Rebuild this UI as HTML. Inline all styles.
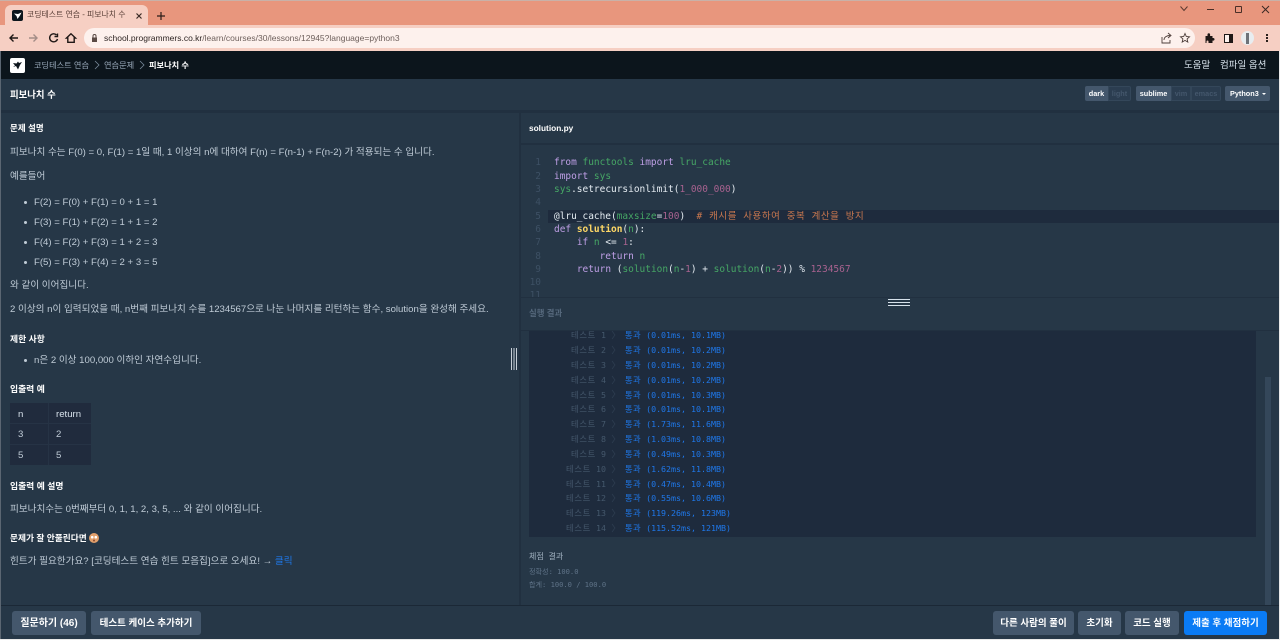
<!DOCTYPE html>
<html lang="ko"><head><meta charset="utf-8"><title>피보나치 수</title>
<style>
*{box-sizing:border-box}
html,body{margin:0;padding:0;width:1280px;height:640px;overflow:hidden;background:#263747}
body{font-family:"Liberation Sans","Noto Sans CJK KR",sans-serif;position:relative}
.a,.t,.m{position:absolute;white-space:pre}
.t{font-size:9.600px;line-height:14px;color:#c0ccd7}
.h{font-weight:700;color:#fff;font-size:8.800px}
.m{font-family:"DejaVu Sans Mono","Noto Sans CJK KR",monospace;font-size:9.470px;line-height:13px;color:#e4ebf1}
.ln{color:#3d5064;width:14px;text-align:right;left:527px}
.k{color:#bf9fe6}.g{color:#46a765}.n{color:#a8628f}.y{color:#ffd866;font-weight:700}.c{color:#c8774f;letter-spacing:.58px}
.r{font-size:8.300px;line-height:12px}
.rl{color:#45586c;text-align:right;left:536px;width:70px}
.rv{color:#1f78ea;left:625px}
.ko{letter-spacing:.4px}
.ko2{letter-spacing:.7px}
.btn{position:absolute;top:611px;height:24px;border-radius:3px;background:#44576c;color:#fff;font-size:9.500px;font-weight:700;line-height:25px;text-align:center}
.b{position:absolute;background:#44576c;color:#fff;font-size:7.300px;line-height:15px;height:15px;text-align:center;font-weight:700}
.off{background:#2b3d50;color:#44576c}
</style></head><body>
<!-- chrome -->
<div class="a" style="left:0;top:0;width:1280px;height:25px;background:#e8967d"></div>
<div class="a" style="left:0;top:0;width:1280px;height:1px;background:#c9b1a8"></div>
<div class="a" style="left:0;top:25px;width:1280px;height:26px;background:#f6cfc3"></div>
<div class="a" style="left:5px;top:5px;width:143px;height:20px;background:#f6cfc3;border-radius:6px 6px 0 0"></div>
<svg class="a" style="left:12px;top:10px" width="11" height="11" viewBox="0 0 11 11"><rect width="11" height="11" rx="2" fill="#0c151c"/><path d="M2 3.500l4 .5 3.500-1.500-1.500 3-2.500 3.500L4.500 6z" fill="#fff"/></svg>
<div class="t" style="left:27px;top:8px;font-size:7.900px;color:#5b4038">코딩테스트 연습 - 피보나치 수</div>
<svg class="a" style="left:135px;top:12px" width="8" height="8" viewBox="0 0 8 8"><path d="M1.500 1.500l5 5M6.500 1.500l-5 5" stroke="#3a2a25" stroke-width="1.200"/></svg>
<svg class="a" style="left:156px;top:11px" width="10" height="10" viewBox="0 0 10 10"><path d="M5 1v8M1 5h8" stroke="#2b1d18" stroke-width="1.200"/></svg>
<svg class="a" style="left:1179px;top:5px" width="10" height="8" viewBox="0 0 10 8"><path d="M1.500 1.500L5 5.500l3.500-4" fill="none" stroke="#5a3a30" stroke-width="1"/></svg>
<div class="a" style="left:1207px;top:9px;width:7px;height:1px;background:#4a2f27"></div>
<div class="a" style="left:1235px;top:6px;width:7px;height:7px;border:1px solid #4a2f27;border-radius:1px"></div>
<svg class="a" style="left:1261px;top:5px" width="9" height="9" viewBox="0 0 9 9"><path d="M1 1l7 7M8 1L1 8" stroke="#3a2a25" stroke-width="1"/></svg>
<svg class="a" style="left:8px;top:32px" width="70" height="12" viewBox="0 0 70 12" fill="none" stroke="#1f1816" stroke-width="1.400"><path d="M10 6H2M5.500 2.500L2 6l3.500 3.500"/><path stroke="#a38d87" d="M29 6h-8M25.500 2.500L29 6l-3.500 3.500"/><path d="M48.500 3A4 4 0 1 0 49.500 7M49.500 1.500v3h-3"/><path d="M63 1.800L58.500 6h1.300v4.300h6.400V6h1.300z"/></svg>
<div class="a" style="left:84px;top:28px;width:1111px;height:20px;border-radius:10px;background:#fdf1ed"></div>
<svg class="a" style="left:91px;top:34px" width="7" height="8" viewBox="0 0 7 8"><path d="M1 3.500h5V8H1z" fill="#5a4a45"/><path d="M2 3.500V2a1.500 1.500 0 0 1 3 0v1.500" fill="none" stroke="#5a4a45"/></svg>
<div class="t" style="left:104px;top:31px;font-size:8.500px;color:#6d5f5b"><span style="color:#2e2523">school.programmers.co.kr</span>/learn/courses/30/lessons/12945?language=python3</div>
<svg class="a" style="left:1161px;top:32px" width="30" height="12" viewBox="0 0 30 12" fill="none" stroke="#4d3e3a" stroke-width=".9"><path d="M1 5v6h8V8M3 8c0-3 3-4.500 6-4.500M7 1l3 2.500L7 6"/><path d="M24 1.500l1.300 3 3.200.3-2.400 2.100.7 3.200-2.800-1.700-2.800 1.700.7-3.200-2.400-2.100 3.200-.3z"/></svg>
<svg class="a" style="left:1204px;top:33px" width="11" height="10" viewBox="0 0 11 10"><path d="M1.500 3h2V1.500a1.300 1.300 0 0 1 2.600 0V3h2.400v2h.7a1.300 1.300 0 0 1 0 2.600h-.7V10H4.500V8.500a1 1 0 0 0-2 0V10h-1z" fill="#1f1816"/></svg>
<div class="a" style="left:1224px;top:34px;width:9px;height:9px;border:1px solid #1f1816;border-right-width:4px;background:#fdf1ed"></div>
<div class="a" style="left:1241px;top:31px;width:13px;height:14px;border-radius:50%;background:#e8edf0"></div>
<div class="a" style="left:1246px;top:33px;width:3px;height:11px;background:#6d7278"></div>
<div class="a" style="left:1266px;top:34px;width:2px;height:2px;background:#2a1f1b;box-shadow:0 3px 0 #2a1f1b,0 6px 0 #2a1f1b"></div>
<!-- navbar -->
<div class="a" style="left:0;top:51px;width:1280px;height:28px;background:#0c151c"></div>
<div class="a" style="left:0;top:79px;width:1280px;height:31px;background:#263747"></div>
<div class="a" style="left:0;top:110px;width:1280px;height:3px;background:#213040"></div>
<svg class="a" style="left:10px;top:58px" width="15" height="15" viewBox="0 0 15 15"><rect width="15" height="15" rx="2" fill="#fff"/><path d="M3 5l3.500.5L8 3.500l1 1.500 3-1-2 3-2 4.500-2-3.500L3 9l2-1.500z" fill="#0c151c"/></svg>
<div class="t" style="left:34px;top:59px;font-size:8.200px;color:#98a8b9">코딩테스트 연습</div>
<div class="t" style="left:104px;top:59px;font-size:8.200px;color:#98a8b9">연습문제</div>
<svg class="a" style="left:94px;top:60px" width="6" height="10" viewBox="0 0 6 10"><path d="M1 1l4 4-4 4" fill="none" stroke="#78899a" stroke-width=".8"/></svg>
<svg class="a" style="left:139px;top:60px" width="6" height="10" viewBox="0 0 6 10"><path d="M1 1l4 4-4 4" fill="none" stroke="#78899a" stroke-width=".8"/></svg>
<div class="t h" style="left:149px;top:59px;font-size:8.200px">피보나치 수</div>
<div class="t" style="left:1184px;top:59px;font-size:9.500px;color:#d7e2eb">도움말</div>
<div class="t" style="left:1220px;top:59px;font-size:9.500px;color:#d7e2eb">컴파일 옵션</div>
<div class="t h" style="left:10px;top:88px;font-size:9.400px">피보나치 수</div>
<div class="b" style="left:1085px;top:86px;width:23px;border-radius:2px 0 0 2px">dark</div>
<div class="b off" style="left:1108px;top:86px;width:23px;border-radius:0 2px 2px 0;border:1px solid #34475a;line-height:13px">light</div>
<div class="b" style="left:1136px;top:86px;width:35px;border-radius:2px 0 0 2px">sublime</div>
<div class="b off" style="left:1171px;top:86px;width:20px;border:1px solid #34475a;line-height:13px">vim</div>
<div class="b off" style="left:1191px;top:86px;width:30px;border:1px solid #34475a;border-radius:0 2px 2px 0;line-height:13px">emacs</div>
<div class="b" style="left:1225px;top:86px;width:45px;border-radius:2px;text-align:left;padding-left:5px">Python3</div>
<div class="a" style="left:1262px;top:93px;border:2px solid transparent;border-top:2px solid #fff"></div>
<!-- left -->
<div class="t h" style="left:10px;top:121px;font-size:8.500px">문제 설명</div>
<div class="t" style="left:10px;top:146px">피보나치 수는 F(0) = 0, F(1) = 1일 때, 1 이상의 n에 대하여 F(n) = F(n-1) + F(n-2) 가 적용되는 수 입니다.</div>
<div class="t" style="left:10px;top:170px">예를들어</div>
<div class="t" style="left:34px;top:196px">F(2) = F(0) + F(1) = 0 + 1 = 1</div>
<div class="t" style="left:34px;top:216px">F(3) = F(1) + F(2) = 1 + 1 = 2</div>
<div class="t" style="left:34px;top:236px">F(4) = F(2) + F(3) = 1 + 2 = 3</div>
<div class="t" style="left:34px;top:256px">F(5) = F(3) + F(4) = 2 + 3 = 5</div>
<div class="a" style="left:24px;top:201px;width:3px;height:3px;border-radius:50%;background:#c0ccd7;box-shadow:0 20px 0 #c0ccd7,0 40px 0 #c0ccd7,0 60px 0 #c0ccd7"></div>
<div class="t" style="left:10px;top:279px">와 같이 이어집니다.</div>
<div class="t" style="left:10px;top:303px">2 이상의 n이 입력되었을 때, n번째 피보나치 수를 1234567으로 나눈 나머지를 리턴하는 함수, solution을 완성해 주세요.</div>
<div class="t h" style="left:10px;top:332px">제한 사항</div>
<div class="t" style="left:34px;top:354px">n은 2 이상 100,000 이하인 자연수입니다.</div>
<div class="a" style="left:24px;top:359px;width:3px;height:3px;border-radius:50%;background:#c0ccd7"></div>
<div class="t h" style="left:10px;top:382px">입출력 예</div>
<div class="a" style="left:10px;top:403px;width:81px;height:62px;background:#202b3d"></div>
<div class="a" style="left:48px;top:403px;width:1px;height:62px;background:#263345"></div>
<div class="a" style="left:10px;top:423px;width:81px;height:1px;background:#263345"></div>
<div class="a" style="left:10px;top:444px;width:81px;height:1px;background:#263345"></div>
<div class="t" style="left:18px;top:408px;color:#d7e2eb">n</div>
<div class="t" style="left:56px;top:408px;color:#d7e2eb">return</div>
<div class="t" style="left:18px;top:428px">3</div><div class="t" style="left:56px;top:428px">2</div>
<div class="t" style="left:18px;top:449px">5</div><div class="t" style="left:56px;top:449px">5</div>
<div class="t h" style="left:10px;top:479px">입출력 예 설명</div>
<div class="t" style="left:10px;top:503px">피보나치수는 0번째부터 0, 1, 1, 2, 3, 5, ... 와 같이 이어집니다.</div>
<div class="t h" style="left:10px;top:531px;font-size:8.700px">문제가 잘 안풀린다면</div>
<svg class="a" style="left:89px;top:533px" width="10" height="10" viewBox="0 0 10 10"><circle cx="5" cy="5" r="5" fill="#e2a06c"/><circle cx="3.200" cy="4.200" r="1.300" fill="#fff"/><circle cx="6.800" cy="4.200" r="1.300" fill="#fff"/><circle cx="5" cy="7.500" r="1" fill="#8a4a30"/></svg>
<div class="t" style="left:10px;top:555px">힌트가 필요한가요? [코딩테스트 연습 힌트 모음집]으로 오세요! → <span style="color:#1f78ea">클릭</span></div>
<svg class="a" style="left:510px;top:348px" width="8" height="22" viewBox="0 0 8 22"><path d="M1.500 0v22M4 0v22M6.500 0v22" stroke="#c8d0d8" stroke-width="1"/></svg>
<div class="a" style="left:519px;top:113px;width:2px;height:492px;background:#213040"></div>
<!-- right -->
<div class="t h" style="left:529px;top:121px;font-size:8.300px">solution.py</div>
<div class="a" style="left:521px;top:143px;width:759px;height:2px;background:#213040"></div>
<div class="a" style="left:548px;top:210px;width:732px;height:13px;background:#1e2b3d"></div>
<div class="m ln" style="top:156px">1</div><div class="m ln" style="top:170px">2</div><div class="m ln" style="top:183px">3</div><div class="m ln" style="top:196px">4</div><div class="m ln" style="top:210px">5</div><div class="m ln" style="top:223px">6</div><div class="m ln" style="top:236px">7</div><div class="m ln" style="top:250px">8</div><div class="m ln" style="top:263px">9</div><div class="m ln" style="top:276px">10</div><div class="m ln" style="top:289px">11</div>
<div class="m" style="left:554px;top:156px"><span class="k">from</span> <span class="g">functools</span> <span class="k">import</span> <span class="g">lru_cache</span></div>
<div class="m" style="left:554px;top:170px"><span class="k">import</span> <span class="g">sys</span></div>
<div class="m" style="left:554px;top:183px"><span class="g">sys</span>.setrecursionlimit(<span class="n">1_000_000</span>)</div>
<div class="m" style="left:554px;top:210px">@lru_cache(<span class="g">maxsize</span>=<span class="n">100</span>)  <span class="c"># 캐시를 사용하여 중복 계산을 방지</span></div>
<div class="m" style="left:554px;top:223px"><span class="k">def</span> <span class="y">solution</span>(<span class="g">n</span>):</div>
<div class="m" style="left:554px;top:236px">    <span class="k">if</span> <span class="g">n</span> &lt;= <span class="n">1</span>:</div>
<div class="m" style="left:554px;top:250px">        <span class="k">return</span> <span class="g">n</span></div>
<div class="m" style="left:554px;top:263px">    <span class="k">return</span> (<span class="g">solution</span>(<span class="g">n</span>-<span class="n">1</span>) + <span class="g">solution</span>(<span class="g">n</span>-<span class="n">2</span>)) % <span class="n">1234567</span></div>
<div class="a" style="left:521px;top:297px;width:759px;height:34px;background:#263747;border-top:1px solid #213040;border-bottom:1px solid #213040"></div>
<div class="a" style="left:888px;top:299px;width:22px;height:7px;border-top:1px solid #d7e2eb;border-bottom:1px solid #d7e2eb"></div>
<div class="a" style="left:888px;top:302px;width:22px;height:1px;background:#d7e2eb"></div>
<div class="t" style="left:529px;top:306px;font-size:8.400px;color:#56697d;font-weight:700">실행 결과</div>
<div class="a" style="left:529px;top:331px;width:727px;height:206px;background:#1e2b3d"></div>
<div class="a" style="left:1265px;top:377px;width:6px;height:228px;background:#34475a"></div>
<svg class="a" style="left:611px;top:330px" width="5" height="205" viewBox="0 0 5 205" fill="none" stroke="#2e3e51" stroke-width=".7"><path d="M1 1l3 4-3 4M1 16l3 4-3 4M1 31l3 4-3 4M1 46l3 4-3 4M1 60l3 4-3 4M1 75l3 4-3 4M1 90l3 4-3 4M1 105l3 4-3 4M1 120l3 4-3 4M1 135l3 4-3 4M1 149l3 4-3 4M1 164l3 4-3 4M1 179l3 4-3 4M1 194l3 4-3 4"/></svg>
<div class="m r rl" style="top:329px"><span class="ko2">테스트</span> 1</div><div class="m r rv" style="top:329px"><span class="ko">통과</span> (0.01ms, 10.1MB)</div>
<div class="m r rl" style="top:344px"><span class="ko2">테스트</span> 2</div><div class="m r rv" style="top:344px"><span class="ko">통과</span> (0.01ms, 10.2MB)</div>
<div class="m r rl" style="top:359px"><span class="ko2">테스트</span> 3</div><div class="m r rv" style="top:359px"><span class="ko">통과</span> (0.01ms, 10.2MB)</div>
<div class="m r rl" style="top:374px"><span class="ko2">테스트</span> 4</div><div class="m r rv" style="top:374px"><span class="ko">통과</span> (0.01ms, 10.2MB)</div>
<div class="m r rl" style="top:389px"><span class="ko2">테스트</span> 5</div><div class="m r rv" style="top:389px"><span class="ko">통과</span> (0.01ms, 10.3MB)</div>
<div class="m r rl" style="top:403px"><span class="ko2">테스트</span> 6</div><div class="m r rv" style="top:403px"><span class="ko">통과</span> (0.01ms, 10.1MB)</div>
<div class="m r rl" style="top:418px"><span class="ko2">테스트</span> 7</div><div class="m r rv" style="top:418px"><span class="ko">통과</span> (1.73ms, 11.6MB)</div>
<div class="m r rl" style="top:433px"><span class="ko2">테스트</span> 8</div><div class="m r rv" style="top:433px"><span class="ko">통과</span> (1.03ms, 10.8MB)</div>
<div class="m r rl" style="top:448px"><span class="ko2">테스트</span> 9</div><div class="m r rv" style="top:448px"><span class="ko">통과</span> (0.49ms, 10.3MB)</div>
<div class="m r rl" style="top:463px"><span class="ko2">테스트</span> 10</div><div class="m r rv" style="top:463px"><span class="ko">통과</span> (1.62ms, 11.8MB)</div>
<div class="m r rl" style="top:478px"><span class="ko2">테스트</span> 11</div><div class="m r rv" style="top:478px"><span class="ko">통과</span> (0.47ms, 10.4MB)</div>
<div class="m r rl" style="top:492px"><span class="ko2">테스트</span> 12</div><div class="m r rv" style="top:492px"><span class="ko">통과</span> (0.55ms, 10.6MB)</div>
<div class="m r rl" style="top:507px"><span class="ko2">테스트</span> 13</div><div class="m r rv" style="top:507px"><span class="ko">통과</span> (119.26ms, 123MB)</div>
<div class="m r rl" style="top:522px"><span class="ko2">테스트</span> 14</div><div class="m r rv" style="top:522px"><span class="ko">통과</span> (115.52ms, 121MB)</div>
<div class="m r" style="left:529px;top:551px;font-size:8px;color:#a3b3c2">체점 결과</div>
<div class="m" style="left:529px;top:565px;font-size:7.100px;color:#5f7388">정확성: 100.0</div>
<div class="m" style="left:529px;top:578px;font-size:7.100px;color:#5f7388">합계: 100.0 / 100.0</div>
<!-- bottom -->
<div class="a" style="left:0;top:605px;width:1280px;height:1px;background:#1b2836"></div>
<div class="btn" style="left:12px;width:74px;font-size:10px">질문하기 (46)</div>
<div class="btn" style="left:91px;width:110px">테스트 케이스 추가하기</div>
<div class="btn" style="left:993px;width:81px">다른 사람의 풀이</div>
<div class="btn" style="left:1078px;width:43px">초기화</div>
<div class="btn" style="left:1125px;width:54px">코드 실행</div>
<div class="btn" style="left:1184px;width:83px;background:#0a7bf5">제출 후 채점하기</div>
<div class="a" style="left:0;top:51px;width:1px;height:589px;background:#5b6672"></div>
<div class="a" style="left:1279px;top:51px;width:1px;height:589px;background:#e9e9e9"></div>
<div class="a" style="left:0;top:639px;width:1280px;height:1px;background:#e9e9e9"></div>
</body></html>
